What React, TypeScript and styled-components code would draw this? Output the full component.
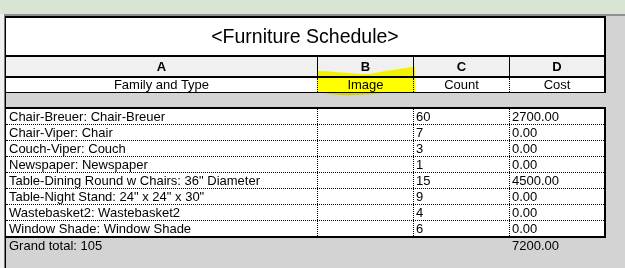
import styled, { createGlobalStyle } from 'styled-components';

const GlobalStyle = createGlobalStyle`
  html, body {
    margin: 0;
    padding: 0;
    background: #d3d3d3;
    font-family: 'Liberation Sans', Arial, sans-serif;
    color: #000;
  }
`;

const COLS = '312px 96px 96px 94px';

const Page = styled.div`
  position: relative;
  width: 625px;
  height: 268px;
  display: flex;
  flex-direction: column;
  overflow: hidden;
`;

const TitleBar = styled.div`
  height: 14px;
  background: #d9e4d3;
`;

const Body = styled.div`
  flex: 1;
  display: flex;
`;

const Gutter = styled.div`
  width: 4px;
  background: #f0f0f0;
`;

const Canvas = styled.div`
  flex: 1;
  background: #d3d3d3;
  border-top: 2px solid #8f8f8f;
  border-left: 1px solid #7d7d7d;
  display: flex;
`;

const Frame = styled.div`
  border-left: 1px solid #000;
  width: 600px;
  display: flex;
  flex-direction: column;
`;

const Title = styled.div`
  box-sizing: border-box;
  height: 41px;
  background: #fff;
  border: 2px solid #000;
  border-left: none;
  display: flex;
  align-items: center;
  justify-content: center;
  font-size: 19.5px;
`;

const Row = styled.div<{ $bg?: string }>`
  display: grid;
  grid-template-columns: ${COLS};
  background: ${(p) => p.$bg || 'transparent'};
`;

const LetterRow = styled(Row)`
  height: 19px;
  border-right: 2px solid #000;
  border-bottom: 2px solid #000;
`;

const NameRow = styled(Row)`
  height: 14px;
  border-right: 2px solid #000;
  border-bottom: 1px solid #000;
`;

const Cell = styled.div<{ $line?: 'solid' | 'dotted' | 'none'; $align?: string; $bold?: boolean }>`
  box-sizing: border-box;
  border-right: ${(p) => (p.$line === 'none' ? 'none' : `1px ${p.$line || 'dotted'} #000`)};
  text-align: ${(p) => p.$align || 'left'};
  font-size: 13px;
  font-weight: ${(p) => (p.$bold ? 700 : 400)};
  white-space: nowrap;
  overflow: hidden;
  padding-left: 2px;
  &:first-child {
    padding-left: 3px;
  }
  &:last-child {
    border-right: none;
  }
`;

const LetterCell = styled(Cell)`
  line-height: 19px;
  padding-left: 0 !important;
`;

const NameCell = styled(Cell)`
  line-height: 14px;
  padding-left: 0 !important;
`;

const Gap = styled.div`
  height: 14px;
`;

const Table = styled.div`
  background: #fff;
  border-top: 2px solid #000;
  border-right: 2px solid #000;
  border-bottom: 2px solid #000;
`;

const DataRow = styled(Row)`
  height: 16px;
  box-sizing: border-box;
  border-bottom: 1px dotted #000;
  &:last-child {
    border-bottom: none;
    height: 15px;
  }
`;

const DataCell = styled(Cell)`
  line-height: 15px;
`;

const TotalRow = styled(Row)`
  height: 16px;
`;

const Highlight = styled.svg`
  position: absolute;
  left: 0;
  top: 0;
  pointer-events: none;
  mix-blend-mode: multiply;
`;

const rows = [
  ['Chair-Breuer: Chair-Breuer', '60', '2700.00'],
  ['Chair-Viper: Chair', '7', '0.00'],
  ['Couch-Viper: Couch', '3', '0.00'],
  ['Newspaper: Newspaper', '1', '0.00'],
  ['Table-Dining Round w Chairs: 36" Diameter', '15', '4500.00'],
  ['Table-Night Stand: 24" x 24" x 30"', '9', '0.00'],
  ['Wastebasket2: Wastebasket2', '4', '0.00'],
  ['Window Shade: Window Shade', '6', '0.00'],
];

const App = () => {
  return (
    <Page>
      <GlobalStyle />
      <TitleBar />
      <Body>
        <Gutter />
        <Canvas>
          <Frame>
            <Title>&lt;Furniture Schedule&gt;</Title>
            <LetterRow $bg='#f0f0f0'>
              {['A', 'B', 'C', 'D'].map((l) => (
                <LetterCell key={l} $line='solid' $align='center' $bold>
                  {l}
                </LetterCell>
              ))}
            </LetterRow>
            <NameRow $bg='#fff'>
              {['Family and Type', 'Image', 'Count', 'Cost'].map((n) => (
                <NameCell key={n} $align='center'>
                  {n}
                </NameCell>
              ))}
            </NameRow>
            <Gap />
            <Table>
              {rows.map(([name, count, cost]) => (
                <DataRow key={name}>
                  <DataCell>{name}</DataCell>
                  <DataCell />
                  <DataCell>{count}</DataCell>
                  <DataCell>{cost}</DataCell>
                </DataRow>
              ))}
            </Table>
            <TotalRow>
              <DataCell $line='none'>Grand total: 105</DataCell>
              <DataCell $line='none' />
              <DataCell $line='none' />
              <DataCell $line='none'>7200.00</DataCell>
            </TotalRow>
          </Frame>
        </Canvas>
      </Body>
      <Highlight width='625' height='268' viewBox='0 0 625 268'>
        <path
          d='M317,71 C330,71 345,73 360,74 C372,75 381,71 393,70 C402,69 408,67 415,67 L416,92 C405,92 395,92 385,93 C370,94 355,96 340,95 C330,94 322,93 317,92 Z'
          fill='#ffff00'
        />
      </Highlight>
    </Page>
  );
};

export default App;
